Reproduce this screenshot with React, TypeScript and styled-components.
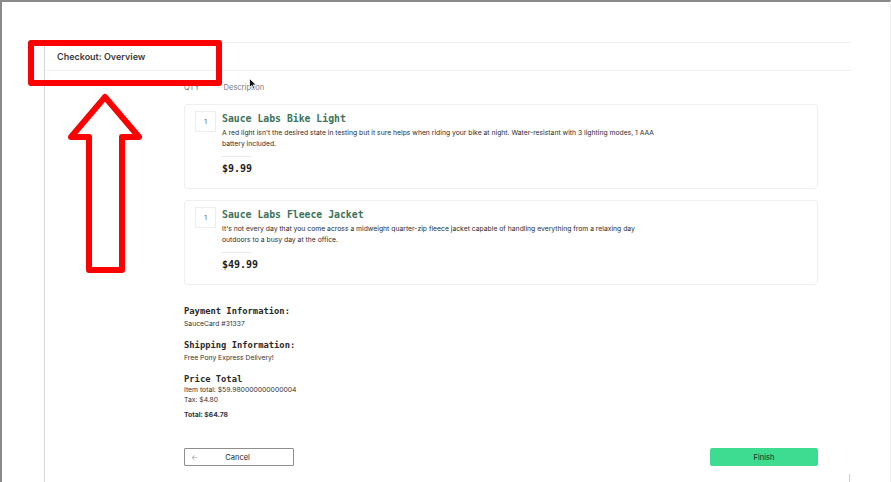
import * as React from "react";
import styled, { createGlobalStyle } from "styled-components";

const GlobalStyle = createGlobalStyle`
  html, body {
    margin: 0;
    padding: 0;
    background: #fff;
  }
  body {
    font-family: Inter, "Open Sans", Arial, sans-serif;
    color: #222;
  }
`;

const Frame = styled.div`
  position: relative;
  box-sizing: border-box;
  width: 891px;
  height: 482px;
  overflow: hidden;
  border-top: 2px solid #8a8a8a;
  border-left: 2px solid #8a8a8a;
  border-right: 1px solid #ececec;
  padding-top: 40px;
  padding-left: 42px;
`;

const Container = styled.div`
  width: 806px;
  height: 440px;
  border-left: 1px solid #d6d6d6;
  display: flex;
  flex-direction: column;

  & > * {
    flex-shrink: 0;
  }
`;

const Header = styled.div`
  height: 27px;
  border-top: 1px solid #f1f1f1;
  border-bottom: 1px solid #f1f1f1;
  display: flex;
  align-items: center;
  padding-left: 12px;
  font-size: 9px;
  font-weight: 600;
  color: #3b3b3b;
`;

const Body = styled.div`
  padding-left: 139px;
  width: 634px;
  display: flex;
  flex-direction: column;

  & > * {
    flex-shrink: 0;
  }
`;

const ColumnLabels = styled.div`
  display: flex;
  align-items: center;
  height: 12px;
  margin-top: 10px;
  font-size: 7.5px;
  color: #7a7a7a;
  gap: 24px;
`;

const ItemList = styled.div`
  display: flex;
  flex-direction: column;
  gap: 11px;
  margin-top: 11px;
`;

const Card = styled.div`
  box-sizing: border-box;
  height: 85px;
  flex-shrink: 0;
  border: 1px solid #efefef;
  border-radius: 3px;
  padding: 6px 10px 0 10px;
  display: flex;
  gap: 6px;
`;

const QtyBox = styled.div`
  box-sizing: border-box;
  width: 21px;
  height: 21px;
  border: 1px solid #ededed;
  display: flex;
  align-items: center;
  justify-content: center;
  font-size: 6.5px;
  color: #555;
  flex-shrink: 0;
`;

const ItemBody = styled.div`
  display: flex;
  flex-direction: column;
`;

const ItemName = styled.div`
  font-family: "DejaVu Sans Mono", "Liberation Mono", monospace;
  font-size: 9.8px;
  font-weight: bold;
  color: #3d7358;
  line-height: 16px;
`;

const ItemDesc = styled.div`
  font-size: 6.8px;
  line-height: 11px;
  color: #2d2d2d;
  white-space: nowrap;
`;

const Divider = styled.div`
  width: 30px;
  height: 1px;
  background: #eaeaea;
  margin-top: 7px;
`;

const Price = styled.div`
  font-family: "DejaVu Sans Mono", "Liberation Mono", monospace;
  font-size: 10px;
  font-weight: bold;
  color: #222;
  line-height: 12px;
  margin-top: 6px;
`;

const Summary = styled.div`
  display: flex;
  flex-direction: column;
  margin-top: 20px;
`;

const SummaryLabel = styled.div<{ $gap?: number }>`
  font-family: "DejaVu Sans Mono", "Liberation Mono", monospace;
  font-size: 8.8px;
  font-weight: bold;
  color: #2a2a2a;
  line-height: 12px;
  margin-top: ${p => p.$gap ?? 0}px;
`;

const SummaryValue = styled.div<{ $gap?: number; $bold?: boolean }>`
  font-size: 6.8px;
  line-height: 10px;
  color: #333;
  margin-top: ${p => p.$gap ?? 0}px;
  font-weight: ${p => (p.$bold ? 700 : 400)};
`;

const Footer = styled.div`
  display: flex;
  justify-content: space-between;
  margin-top: 28px;
`;

const CancelButton = styled.button`
  box-sizing: border-box;
  width: 110px;
  height: 18px;
  border: 1.5px solid #8e8e8e;
  border-radius: 1px;
  background: #fff;
  display: flex;
  align-items: center;
  padding: 0 6px;
  font-family: Inter, Arial, sans-serif;
  font-size: 7.5px;
  color: #222;
`;

const BackArrow = styled.span`
  color: #9a9a9a;
`;

const CancelLabel = styled.span`
  flex: 1;
  text-align: center;
  padding-right: 10px;
`;

const FinishButton = styled.button`
  box-sizing: border-box;
  width: 108px;
  height: 18px;
  border: none;
  border-radius: 2px;
  background: #3ddc91;
  font-family: Inter, Arial, sans-serif;
  font-size: 7.5px;
  color: #15281f;
`;

const EdgeMark = styled.div`
  align-self: flex-end;
  margin-right: -32px;
  margin-top: 8px;
  width: 1px;
  height: 12px;
  background: #cfcfcf;
`;

const Highlight = styled.div`
  position: absolute;
  left: 26px;
  top: 38px;
  width: 194px;
  height: 46px;
  box-sizing: border-box;
  border: 6px solid #ff0000;
  border-radius: 3px;
`;

const ArrowOverlay = styled.svg`
  position: absolute;
  left: 0;
  top: 0;
`;

const Cursor = styled.svg`
  position: absolute;
  left: 247px;
  top: 76px;
`;

const items = [
  {
    name: "Sauce Labs Bike Light",
    lines: [
      "A red light isn't the desired state in testing but it sure helps when riding your bike at night. Water-resistant with 3 lighting modes, 1 AAA",
      "battery included.",
    ],
    price: "$9.99",
  },
  {
    name: "Sauce Labs Fleece Jacket",
    lines: [
      "It's not every day that you come across a midweight quarter-zip fleece jacket capable of handling everything from a relaxing day",
      "outdoors to a busy day at the office.",
    ],
    price: "$49.99",
  },
];

export default function App() {
  return (
    <>
      <GlobalStyle />
      <Frame>
        <Container>
          <Header>Checkout: Overview</Header>
          <Body>
            <ColumnLabels>
              <span>QTY</span>
              <span>Description</span>
            </ColumnLabels>
            <ItemList>
              {items.map(item => (
                <Card key={item.name}>
                  <QtyBox>1</QtyBox>
                  <ItemBody>
                    <ItemName>{item.name}</ItemName>
                    {item.lines.map(line => (
                      <ItemDesc key={line}>{line}</ItemDesc>
                    ))}
                    <Divider />
                    <Price>{item.price}</Price>
                  </ItemBody>
                </Card>
              ))}
            </ItemList>
            <Summary>
              <SummaryLabel>Payment Information:</SummaryLabel>
              <SummaryValue $gap={2}>SauceCard #31337</SummaryValue>
              <SummaryLabel $gap={10}>Shipping Information:</SummaryLabel>
              <SummaryValue $gap={2}>Free Pony Express Delivery!</SummaryValue>
              <SummaryLabel $gap={10}>Price Total</SummaryLabel>
              <SummaryValue>Item total: $59.980000000000004</SummaryValue>
              <SummaryValue>Tax: $4.80</SummaryValue>
              <SummaryValue $gap={5} $bold>Total: $64.78</SummaryValue>
            </Summary>
            <Footer>
              <CancelButton>
                <BackArrow>←</BackArrow>
                <CancelLabel>Cancel</CancelLabel>
              </CancelButton>
              <FinishButton>Finish</FinishButton>
            </Footer>
            <EdgeMark />
          </Body>
        </Container>
        <Highlight />
        <ArrowOverlay width="891" height="480" viewBox="2 2 891 480">
          <polygon
            points="105,97 139,137 122,137 122,270 89,270 89,137 71,137"
            fill="none"
            stroke="#ff0000"
            strokeWidth="6"
            strokeLinejoin="round"
          />
        </ArrowOverlay>
        <Cursor width="8" height="12" viewBox="0 0 8 12">
          <path d="M0.5 0.5 L0.5 9.5 L2.8 7.4 L4.4 11 L5.8 10.4 L4.2 6.9 L7.2 6.9 Z" fill="#111" stroke="#fff" strokeWidth="0.8" />
        </Cursor>
      </Frame>
    </>
  );
}
